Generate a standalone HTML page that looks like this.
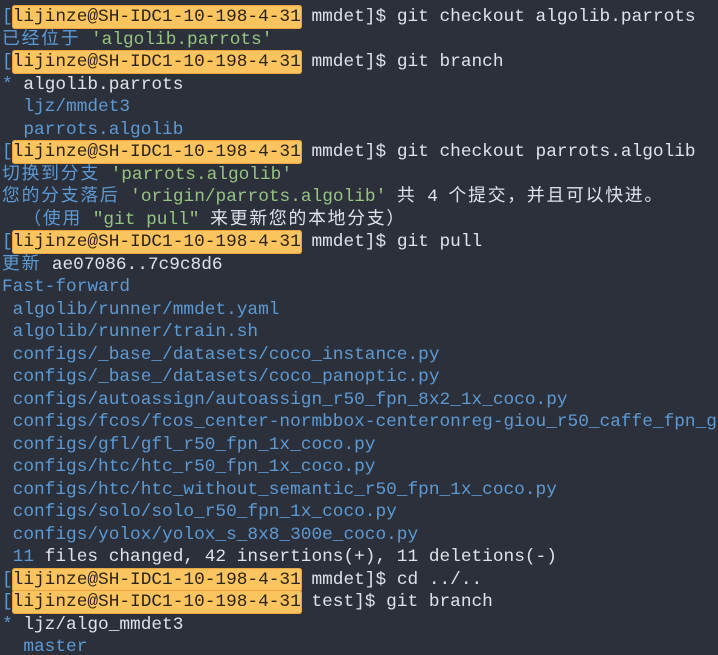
<!DOCTYPE html><html><head><meta charset="utf-8"><style>
html,body{margin:0;padding:0;background:#2b303b;width:718px;height:655px;overflow:hidden}
pre{margin:0;padding:6px 0 0 2px;font-family:"Liberation Mono","Noto Sans CJK SC",monospace;font-size:17.8px;line-height:22.5px;color:#dfe3e8;white-space:pre;width:718px;overflow:hidden}
.b{color:#5d9ad4}.g{color:#97c480}
.h{background:#fcc45e;color:#2a2418;border:1px solid #e9a443;border-radius:3px;margin:0 -1px;padding:1px 0}
.c{letter-spacing:1.8px}
</style></head><body><pre><span class="b">[</span><span class="h">lijinze@SH-IDC1-10-198-4-31</span> mmdet]$ git checkout algolib.parrots
<span class="b"><span class="c">已经位于</span> </span><span class="g">'algolib.parrots'</span>
<span class="b">[</span><span class="h">lijinze@SH-IDC1-10-198-4-31</span> mmdet]$ git branch
<span class="b">*</span> algolib.parrots
<span class="b">  ljz/mmdet3</span>
<span class="b">  parrots.algolib</span>
<span class="b">[</span><span class="h">lijinze@SH-IDC1-10-198-4-31</span> mmdet]$ git checkout parrots.algolib
<span class="b"><span class="c">切换到分支</span> </span><span class="g">'parrots.algolib'</span>
<span class="b"><span class="c">您的分支落后</span> </span><span class="g">'origin/parrots.algolib'</span> <span class="c">共</span> 4 <span class="c">个提交，并且可以快进。</span>
<span class="b">  <span class="c">（使用</span> </span><span class="g">"git pull"</span> <span class="c">来更新您的本地分支）</span>
<span class="b">[</span><span class="h">lijinze@SH-IDC1-10-198-4-31</span> mmdet]$ git pull
<span class="b"><span class="c">更新</span> </span>ae07086..7c9c8d6
<span class="b">Fast-forward
 algolib/runner/mmdet.yaml
 algolib/runner/train.sh
 configs/_base_/datasets/coco_instance.py
 configs/_base_/datasets/coco_panoptic.py
 configs/autoassign/autoassign_r50_fpn_8x2_1x_coco.py
 configs/fcos/fcos_center-normbbox-centeronreg-giou_r50_caffe_fpn_g
 configs/gfl/gfl_r50_fpn_1x_coco.py
 configs/htc/htc_r50_fpn_1x_coco.py
 configs/htc/htc_without_semantic_r50_fpn_1x_coco.py
 configs/solo/solo_r50_fpn_1x_coco.py
 configs/yolox/yolox_s_8x8_300e_coco.py
 11</span> files changed, 42 insertions(+), 11 deletions(-)
<span class="b">[</span><span class="h">lijinze@SH-IDC1-10-198-4-31</span> mmdet]$ cd ../..
<span class="b">[</span><span class="h">lijinze@SH-IDC1-10-198-4-31</span> test]$ git branch
<span class="b">*</span> ljz/algo_mmdet3
<span class="b">  master</span></pre></body></html>
